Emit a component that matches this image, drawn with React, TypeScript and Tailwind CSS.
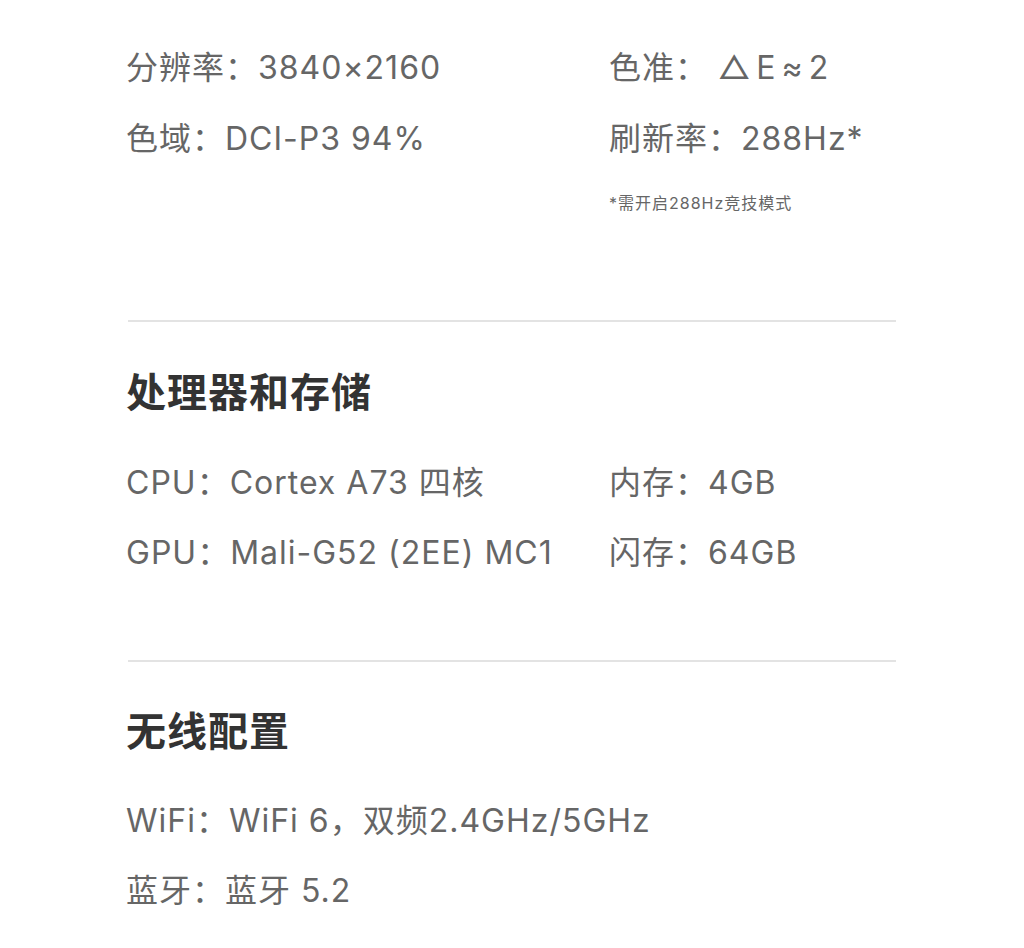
const FONT = "font-['Inter','Noto_Sans_CJK_SC',sans-serif]";

function Spec({ children }: { children: React.ReactNode }) {
  return <div className="text-[32px] leading-[48px] tracking-[1px] text-[#666666] whitespace-nowrap">{children}</div>;
}

function Heading({ children }: { children: React.ReactNode }) {
  return <h2 className="text-[40px] leading-[56px] tracking-[1px] font-bold text-[#333333]">{children}</h2>;
}

function Divider() {
  return <div className="h-[2px] w-full bg-[#e3e3e3]" />;
}

export default function App() {
  return (
    <div className={`min-h-[948px] w-[1024px] bg-white ${FONT}`}>
      <div className="mx-auto w-[768px] pt-[44px]">
        {/* 屏幕参数 */}
        <div className="-ml-[2px] flex">
          <div className="flex w-[483px] flex-col gap-[23px]">
            <Spec>分辨率：3840×2160</Spec>
            <Spec>色域：DCI-P3 94%</Spec>
          </div>
          <div className="flex flex-col">
            <div className="flex flex-col gap-[23px]">
              <Spec>
                色准： <span className="tracking-[6px]">△E≈</span>2
              </Spec>
              <Spec>刷新率：288Hz*</Spec>
            </div>
            <div className="mt-[28px] text-[16px] leading-[24px] tracking-[1px] text-[#666666]">*需开启288Hz竞技模式</div>
          </div>
        </div>

        <div className="mt-[105px]">
          <Divider />
        </div>

        {/* 处理器和存储 */}
        <div className="-ml-[2px] mt-[43px]">
          <Heading>处理器和存储</Heading>
          <div className="mt-[38px] flex">
            <div className="flex w-[483px] flex-col gap-[22px]">
              <Spec>CPU：Cortex A73 四核</Spec>
              <Spec>GPU：Mali-G52 (2EE) MC1</Spec>
            </div>
            <div className="flex flex-col gap-[22px]">
              <Spec>内存：4GB</Spec>
              <Spec>闪存：64GB</Spec>
            </div>
          </div>
        </div>

        <div className="mt-[83px]">
          <Divider />
        </div>

        {/* 无线配置 */}
        <div className="-ml-[2px] mt-[42px]">
          <Heading>无线配置</Heading>
          <div className="mt-[37px] flex flex-col gap-[22px]">
            <Spec>WiFi：WiFi 6，双频2.4GHz/5GHz</Spec>
            <Spec>蓝牙：蓝牙 5.2</Spec>
          </div>
        </div>
      </div>
    </div>
  );
}
